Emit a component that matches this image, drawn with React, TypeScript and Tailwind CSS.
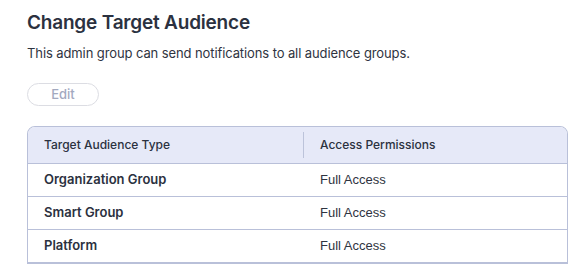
const rows = [
  { type: "Organization Group", access: "Full Access" },
  { type: "Smart Group", access: "Full Access" },
  { type: "Platform", access: "Full Access" },
]

export default function App() {
  return (
    <div className="min-h-[276px] w-[580px] bg-white px-[27px] pt-[9px] font-['Inter',sans-serif] text-[#2b3140]">
      <h1 className="text-[19px] font-semibold leading-[28px] tracking-[-0.2px]">
        Change Target Audience
      </h1>
      <p className="mt-[6px] text-[13px] leading-[20px] tracking-[-0.1px] text-[#2f3441]">
        This admin group can send notifications to all audience groups.
      </p>
      <button className="mt-[20px] flex h-[23px] w-[72px] items-center justify-center rounded-full border border-[#dcdde3] text-[13px] font-medium text-[#a3a9bf]">
        Edit
      </button>
      <div className="mt-[20px] w-[541px] overflow-hidden rounded-t-[8px] border border-b-2 border-[#b9c0d9]">
        <div className="flex h-[36px] items-center bg-[#e6e9f8] text-[12px] font-medium">
          <div className="w-[275px] pl-[16px]">Target Audience Type</div>
          <div className="h-[26px] w-px bg-[#bcc3da]" />
          <div className="pl-[16px]">Access Permissions</div>
        </div>
        {rows.map((r) => (
          <div
            key={r.type}
            className="flex h-[33px] items-center border-t border-[#b9c0d9] text-[13px]"
          >
            <div className="w-[276px] pl-[16px] font-semibold">{r.type}</div>
            <div className="pl-[16px] font-['Liberation_Sans',sans-serif] text-[13px] text-[#2f3441]">
              {r.access}
            </div>
          </div>
        ))}
      </div>
    </div>
  )
}
